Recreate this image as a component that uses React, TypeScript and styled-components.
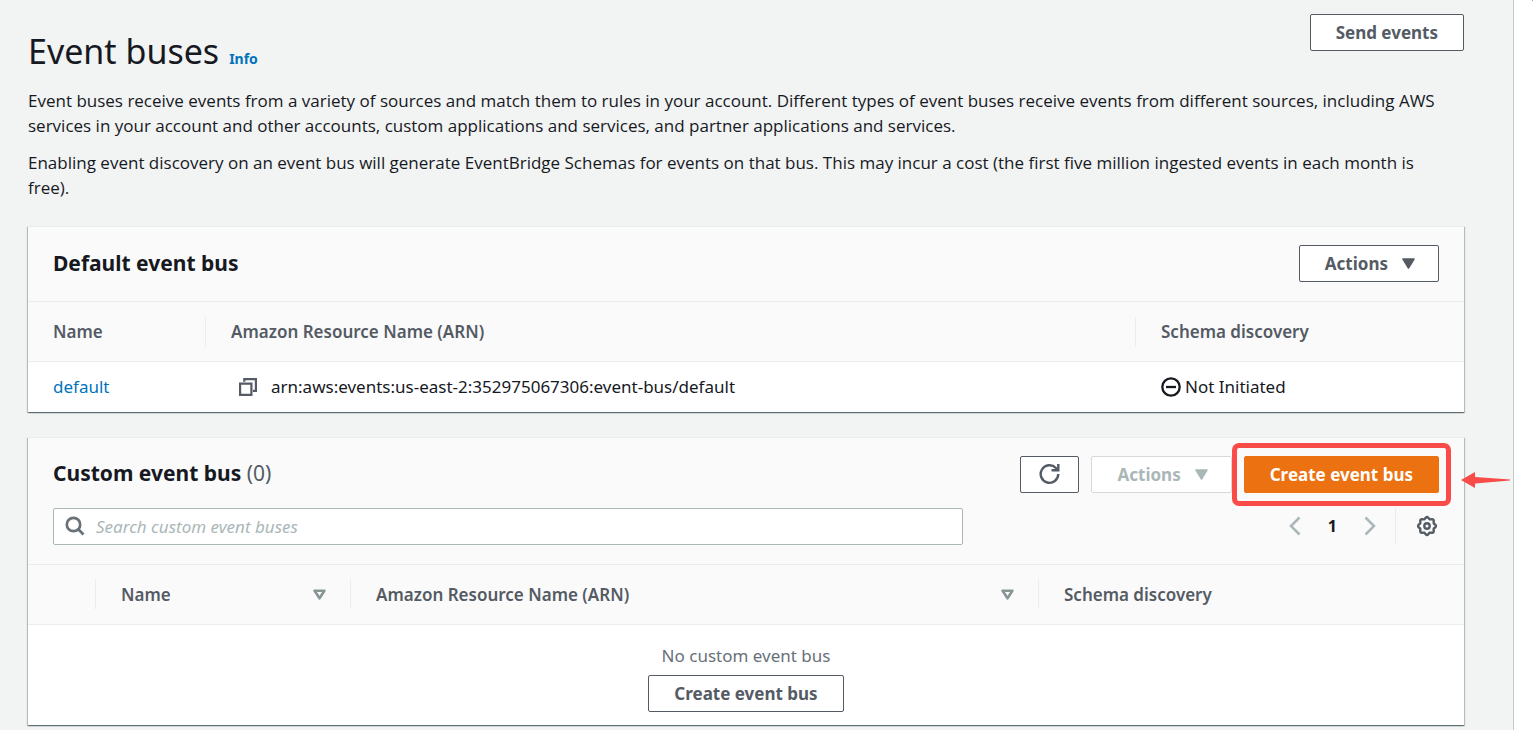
import React from 'react';
import styled, { createGlobalStyle, css } from 'styled-components';

const GlobalStyle = createGlobalStyle`
  *, *::before, *::after { box-sizing: border-box; }
  body {
    margin: 0;
    background: #fff;
    color: #16191f;
    font-family: "Noto Sans", "Open Sans", sans-serif;
    font-size: 17px;
    line-height: 25px;
  }
  button, input { font: inherit; }
`;

const Page = styled.div`
  display: flex;
  min-height: 100vh;
`;

const Main = styled.main`
  flex: 1;
  min-width: 0;
  padding: 14px 49px 4px 28px;
  background: #f2f3f3;
`;

const HelpRail = styled.aside`
  flex: 0 0 20px;
  overflow: hidden;
  border-left: 1px solid #c3caca;
  background: #fff;
`;

const CloseButton = styled.button`
  display: block;
  margin: -16px 0 0 16px;
  padding: 0;
  border: 0;
  background: none;
  color: #545b64;
  svg { display: block; }
`;

const PageHeader = styled.header`
  display: flex;
  justify-content: space-between;
  align-items: flex-start;
`;

const Title = styled.h1`
  margin: 0;
  padding-top: 14px;
  font-size: 34px;
  font-weight: 400;
  line-height: 46px;
`;

const InfoLink = styled.a`
  margin-left: 10px;
  color: #0073bb;
  font-size: 14px;
  font-weight: 700;
  line-height: 20px;
  text-decoration: none;
`;

const TextLink = styled.a`
  color: #0073bb;
  text-decoration: none;
`;

const Description = styled.p`
  margin: 0 0 12px;
  font-family: "Open Sans", "Noto Sans", sans-serif;
`;

const Intro = styled.div`
  padding: 14px 16px 14px 0;
`;

const Button = styled.button<{ $primary?: boolean; $dropdown?: boolean; $icon?: boolean }>`
  display: inline-flex;
  align-items: center;
  justify-content: center;
  gap: 14px;
  height: 37px;
  padding: 0 ${(p) => (p.$icon ? 18 : p.$dropdown ? 23 : 25)}px 0 ${(p) => (p.$icon ? 18 : 25)}px;
  border: 1px solid #545b64;
  border-radius: 2px;
  background: #fff;
  color: #545b64;
  font-weight: 700;
  white-space: nowrap;
  svg { display: block; }
  &:disabled {
    border-color: #d5dbdb;
    color: #aab7b8;
  }
  ${(p) => p.$primary && css`
    border-color: #ec7211;
    background: #ec7211;
    color: #fff;
  `}
`;

const Card = styled.section`
  margin-bottom: 25px;
  border-top: 1px solid #eaeded;
  background: #fff;
  box-shadow:
    0 1px 1px rgba(0, 28, 36, 0.4),
    1px 1px 1px rgba(0, 28, 36, 0.2),
    -1px 1px 1px rgba(0, 28, 36, 0.2);
`;

const CardHeader = styled.div`
  display: flex;
  flex-direction: column;
  gap: 15px;
  padding: 18px 25px 19px;
  background: #fafafa;
`;

const HeaderRow = styled.div`
  display: flex;
  align-items: center;
  justify-content: space-between;
`;

const CardTitle = styled.h2`
  margin: 0;
  padding-bottom: 2px;
  font-size: 21px;
  font-weight: 700;
  line-height: 28px;
`;

const Counter = styled.span`
  color: #545b64;
  font-weight: 400;
`;

const ButtonGroup = styled.div`
  display: flex;
  gap: 12px;
`;

const Highlight = styled.div`
  position: relative;
  display: flex;
  &::after {
    content: "";
    position: absolute;
    inset: -13px -12px;
    border: 5px solid #f94b48;
    border-radius: 7px;
    pointer-events: none;
  }
`;

const Arrow = styled.svg`
  position: absolute;
  left: calc(100% + 22px);
  top: 16px;
`;

const SearchBox = styled.label`
  display: flex;
  align-items: center;
  gap: 11px;
  flex: 0 1 910px;
  height: 37px;
  padding: 0 11px;
  border: 1px solid #aab7b8;
  border-radius: 2px;
  background: #fff;
  color: #687078;
`;

const SearchInput = styled.input`
  flex: 1;
  min-width: 0;
  padding: 0;
  border: 0;
  outline: 0;
  background: none;
  color: #16191f;
  &::placeholder {
    color: #aab7b8;
    font-style: italic;
    opacity: 1;
  }
`;

const Tools = styled.div`
  display: flex;
  align-items: center;
  height: 37px;
`;

const Pager = styled.nav`
  display: flex;
  align-items: center;
  gap: 27px;
  height: 37px;
  padding-right: 19px;
  border-right: 1px solid #eaeded;
`;

const PageNumber = styled.span`
  font-size: 16px;
  font-weight: 700;
`;

const IconButton = styled.button`
  padding: 0;
  border: 0;
  background: none;
  color: #545b64;
  svg { display: block; }
  &:disabled { color: #aab7b8; }
`;

const Settings = styled.div`
  display: flex;
  padding: 0 1px 0 20px;
`;

const Table = styled.table`
  width: 100%;
  table-layout: fixed;
  border-collapse: collapse;
`;

const Col = styled.col<{ $width?: number }>`
  width: ${(p) => (p.$width ? `${p.$width}px` : 'auto')};
`;

const HeadCell = styled.th`
  height: 60px;
  padding: 0;
  border-top: 1px solid #eaeded;
  border-bottom: 1px solid #eaeded;
  background: #fafafa;
  color: #545b64;
  font-weight: 600;
  text-align: left;
`;

const HeadLabel = styled.div<{ $last?: boolean }>`
  display: flex;
  align-items: center;
  justify-content: space-between;
  height: 30px;
  padding: 0 24px 0 25px;
  border-right: 1px solid ${(p) => (p.$last ? 'transparent' : '#eaeded')};
`;

const Cell = styled.td`
  height: 50px;
  padding: 0 25px;
`;

const CellContent = styled.div<{ $indent?: boolean }>`
  display: flex;
  align-items: center;
  gap: ${(p) => (p.$indent ? 14 : 4)}px;
  padding-left: ${(p) => (p.$indent ? 8 : 0)}px;
`;

const EmptyCell = styled.td`
  padding: 18px 0 13px;
`;

const EmptyState = styled.div`
  display: flex;
  flex-direction: column;
  align-items: center;
  gap: 7px;
  color: #687078;
`;

const Caret = () => (
  <svg width="13" height="11" viewBox="0 0 13 11" aria-hidden="true">
    <path d="M1 1h11L6.500 10z" fill="currentColor" stroke="currentColor" strokeWidth="1.500" strokeLinejoin="round" />
  </svg>
);

const SortIcon = () => (
  <svg width="13" height="11" viewBox="0 0 13 11" aria-hidden="true">
    <path d="M1.600 1.700h9.800L6.500 9.300z" fill="none" stroke="#879596" strokeWidth="2.600" strokeLinejoin="round" />
  </svg>
);

const RefreshIcon = () => (
  <svg width="21" height="22" viewBox="0 0 21 22" fill="none" stroke="currentColor" strokeWidth="2.400" aria-hidden="true">
    <path d="M19.300 11a8.800 8.800 0 1 1-2.400-6l1.900 2.200" />
    <path d="M19.300 1v6.300h-6.800" />
  </svg>
);

const SearchIcon = () => (
  <svg width="20" height="20" viewBox="0 0 20 20" fill="none" stroke="currentColor" strokeWidth="2.700" aria-hidden="true">
    <circle cx="8.500" cy="8.500" r="6.700" />
    <path d="M13.300 13.300l5.200 5.200" />
  </svg>
);

const ChevronIcon = ({ right }: { right?: boolean }) => (
  <svg width="12" height="20" viewBox="0 0 12 20" fill="none" stroke="currentColor" strokeWidth="2.500" aria-hidden="true">
    <path d={right ? 'M1.500 1.500l8.500 8.500-8.500 8.500' : 'M10.500 1.500L2 10l8.500 8.500'} />
  </svg>
);

const gearOutline = Array.from({ length: 96 }, (_, i) => {
  const angle = (i / 96) * Math.PI * 2;
  const radius = 8.1 + 0.8 * Math.cos(angle * 8);
  return `${(11 + radius * Math.cos(angle)).toFixed(2)},${(11 + radius * Math.sin(angle)).toFixed(2)}`;
}).join(' ');

const GearIcon = () => (
  <svg width="22" height="22" viewBox="0 0 22 22" fill="none" stroke="currentColor" strokeWidth="2.400" aria-hidden="true">
    <polygon points={gearOutline} />
    <circle cx="11" cy="11" r="2.700" />
  </svg>
);

const CopyIcon = () => (
  <svg width="18" height="18" viewBox="0 0 18 18" fill="none" stroke="currentColor" strokeWidth="2.200" aria-hidden="true">
    <path d="M1.100 5.600h11.300v11.300H1.100z" />
    <path d="M5.300 3.800V1.100h11.600v11.700h-3" />
  </svg>
);

const MinusCircleIcon = () => (
  <svg width="20" height="20" viewBox="0 0 20 20" fill="none" stroke="#16191f" strokeWidth="2.300" aria-hidden="true">
    <circle cx="10" cy="10" r="8.700" />
    <path d="M5 10h10" />
  </svg>
);

const CloseIcon = () => (
  <svg width="18" height="18" viewBox="0 0 18 18" fill="none" stroke="currentColor" strokeWidth="2.500" aria-hidden="true">
    <path d="M2 2l14 14M16 2L2 16" />
  </svg>
);

export default function App() {
  return (
    <>
      <GlobalStyle />
      <Page>
        <Main>
          <PageHeader>
            <Title>
              Event buses
              <InfoLink href="#info">Info</InfoLink>
            </Title>
            <Button type="button">Send events</Button>
          </PageHeader>
          <Intro>
            <Description>
              Event buses receive events from a variety of sources and match them to rules in your account. Different
              types of event buses receive events from different sources, including AWS services in your account and
              other accounts, custom applications and services, and partner applications and services.
            </Description>
            <Description>
              Enabling event discovery on an event bus will generate EventBridge Schemas for events on that bus. This
              may incur a cost (the first five million ingested events in each month is free).
            </Description>
          </Intro>

          <Card>
            <CardHeader>
              <HeaderRow>
                <CardTitle>Default event bus</CardTitle>
                <Button type="button" $dropdown>
                  Actions <Caret />
                </Button>
              </HeaderRow>
            </CardHeader>
            <Table>
              <colgroup>
                <Col $width={178} />
                <Col />
                <Col $width={328} />
              </colgroup>
              <thead>
                <tr>
                  <HeadCell><HeadLabel>Name</HeadLabel></HeadCell>
                  <HeadCell><HeadLabel>Amazon Resource Name (ARN)</HeadLabel></HeadCell>
                  <HeadCell><HeadLabel $last>Schema discovery</HeadLabel></HeadCell>
                </tr>
              </thead>
              <tbody>
                <tr>
                  <Cell><TextLink href="#default">default</TextLink></Cell>
                  <Cell>
                    <CellContent $indent>
                      <IconButton type="button" aria-label="Copy ARN"><CopyIcon /></IconButton>
                      arn:aws:events:us-east-2:352975067306:event-bus/default
                    </CellContent>
                  </Cell>
                  <Cell>
                    <CellContent><MinusCircleIcon />Not Initiated</CellContent>
                  </Cell>
                </tr>
              </tbody>
            </Table>
          </Card>

          <Card>
            <CardHeader>
              <HeaderRow>
                <CardTitle>Custom event bus <Counter>(0)</Counter></CardTitle>
                <ButtonGroup>
                  <Button type="button" aria-label="Refresh" $icon><RefreshIcon /></Button>
                  <Button type="button" disabled $dropdown>
                    Actions <Caret />
                  </Button>
                  <Highlight>
                    <Button type="button" $primary>Create event bus</Button>
                    <Arrow width="50" height="16" viewBox="0 0 50 16" aria-hidden="true">
                      <path d="M0 8L14 0v5L49 7.500v1L14 11.500V16z" fill="#f94b48" />
                    </Arrow>
                  </Highlight>
                </ButtonGroup>
              </HeaderRow>
              <HeaderRow>
                <SearchBox>
                  <SearchIcon />
                  <SearchInput type="text" placeholder="Search custom event buses" aria-label="Search custom event buses" />
                </SearchBox>
                <Tools>
                  <Pager aria-label="Pagination">
                    <IconButton type="button" disabled aria-label="Previous page"><ChevronIcon /></IconButton>
                    <PageNumber>1</PageNumber>
                    <IconButton type="button" disabled aria-label="Next page"><ChevronIcon right /></IconButton>
                  </Pager>
                  <Settings>
                    <IconButton type="button" aria-label="Preferences"><GearIcon /></IconButton>
                  </Settings>
                </Tools>
              </HeaderRow>
            </CardHeader>
            <Table>
              <colgroup>
                <Col $width={68} />
                <Col $width={255} />
                <Col />
                <Col $width={425} />
              </colgroup>
              <thead>
                <tr>
                  <HeadCell><HeadLabel /></HeadCell>
                  <HeadCell><HeadLabel>Name <SortIcon /></HeadLabel></HeadCell>
                  <HeadCell><HeadLabel>Amazon Resource Name (ARN) <SortIcon /></HeadLabel></HeadCell>
                  <HeadCell><HeadLabel $last>Schema discovery</HeadLabel></HeadCell>
                </tr>
              </thead>
              <tbody>
                <tr>
                  <EmptyCell colSpan={4}>
                    <EmptyState>
                      No custom event bus
                      <Button type="button">Create event bus</Button>
                    </EmptyState>
                  </EmptyCell>
                </tr>
              </tbody>
            </Table>
          </Card>
        </Main>
        <HelpRail>
          <CloseButton type="button" aria-label="Close help panel"><CloseIcon /></CloseButton>
        </HelpRail>
      </Page>
    </>
  );
}
